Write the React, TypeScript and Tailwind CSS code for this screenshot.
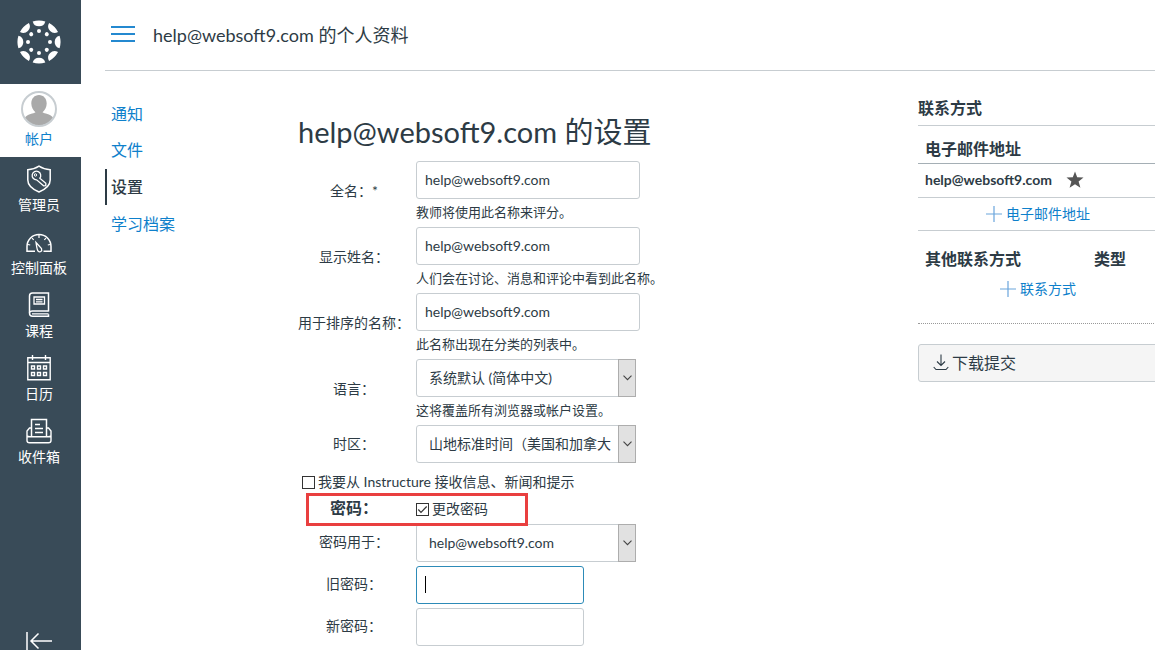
import type { ReactNode } from "react";

const EMAIL = "help@websoft9.com";

function Logo() {
  return (
    <svg width="44" height="44" viewBox="-22 -22 44 44" fill="#fff" aria-hidden="true">
      {[0, 45, 90, 135, 180, 225, 270, 315].map((angle) => (
        <g key={angle} transform={`rotate(${angle})`}>
          <path d="M-6.3 -20.6A21.5 21.5 0 0 1 6.3 -20.6A6.5 6.5 0 0 1 -6.3 -20.6Z" />
          <circle cy="-11" r="2" />
        </g>
      ))}
    </svg>
  );
}

function Icon({ children }: { children: ReactNode }) {
  return (
    <svg width="28" height="28" viewBox="0 0 28 28" fill="none" stroke="#fff" strokeWidth="1.5" aria-hidden="true">
      {children}
    </svg>
  );
}

const menu = [
  {
    label: "管理员",
    icon: (
      <Icon>
        <path d="M14 1.2C17.5 3.6 21.5 4.6 25.2 4.8V15C25.2 20.5 20 24.5 14 27C8 24.5 2.8 20.5 2.8 15V4.8C6.5 4.6 10.5 3.6 14 1.2Z" />
        <path d="M14.8 13.2A4.3 4.3 0 1 0 11.6 14.8L18.6 20.8L20.8 20.6V18.2Z" strokeWidth="1.3" />
        <circle cx="10.5" cy="10" r="1.2" strokeWidth="1" />
      </Icon>
    ),
  },
  {
    label: "控制面板",
    icon: (
      <Icon>
        <path d="M10 23.3H2V18.5A12 12 0 0 1 26 18.5V23.3H18.5" />
        <path d="M11 14.5L16.5 20.5C17.5 23.5 14.8 24.8 13 23C12 22 11.8 19.5 11 14.5Z" strokeWidth="1.3" />
        <path d="M14 7V10M7 10.2L8.7 11.9M21 10.2L19.3 11.9M3 16.5L5.2 17M25 16.5L22.8 17" strokeWidth="1.2" />
      </Icon>
    ),
  },
  {
    label: "课程",
    icon: (
      <Icon>
        <path d="M23.5 20.5V2H7.5C5.5 2 4.5 3 4.5 5V22C4.5 24 5.5 25.3 7.5 25.3H23.5V23.3" />
        <path d="M4.5 22C4.5 20.8 5.5 20 7.5 20H23.5M7 22.8H23.5" strokeWidth="1.3" />
        <path d="M9 6H19.5V13H9ZM11 8.5H17.5M11 10.8H17.5" strokeWidth="1.3" />
      </Icon>
    ),
  },
  {
    label: "日历",
    icon: (
      <Icon>
        <path d="M2.8 3.8H25.2V25.8H2.8ZM2.8 8.5H25.2M7.5 1V6M20.5 1V6" strokeWidth="1.4" />
        <path
          d="M6.5 12H9.5V15H6.5ZM12.5 12H15.5V15H12.5ZM18.5 12H21.5V15H18.5ZM6.5 18.5H9.5V21.5H6.5ZM12.5 18.5H15.5V21.5H12.5ZM18.5 18.5H21.5V21.5H18.5Z"
          strokeWidth="1.4"
        />
      </Icon>
    ),
  },
  {
    label: "收件箱",
    icon: (
      <Icon>
        <path d="M6.5 19.5V2.5H21.5V19.5" />
        <path
          d="M6.5 11H4.5L2 14V23.5C2 25 3 25.8 4.5 25.8H23.5C25 25.8 26 25 26 23.5V14L23.5 11H21.5M2 18.5C2.5 19.5 3.5 19.7 5 19.7H23C24.5 19.7 25.5 19.5 26 18.5"
          strokeWidth="1.4"
        />
        <path d="M10 7.5H15M10 11.5H18M10 15.5H18" strokeWidth="1.3" />
      </Icon>
    ),
  },
];

function Sidebar() {
  return (
    <nav className="flex h-full w-[81px] shrink-0 flex-col bg-[#394b58] text-sm text-white">
      <a href="#" aria-label="Canvas" className="flex h-21 items-center justify-center pr-[3px]">
        <Logo />
      </a>
      <a href="#" className="flex h-[73px] flex-col items-center bg-white pt-[7px] pr-[3px] text-[#0e80cb]">
        <svg width="36" height="36" viewBox="0 0 36 36" aria-hidden="true">
          <clipPath id="face">
            <circle cx="18" cy="18" r="16.5" />
          </clipPath>
          <g clipPath="url(#face)" fill="#a9a9a9">
            <path d="M18 4C22.5 4 25.7 7.5 25.7 12.5C25.7 16.5 23.5 19.8 21.5 21.3C23.5 23 29 22.6 32 26.5V36H4V26.5C7 22.6 12.5 23 14.5 21.3C12.5 19.8 10.3 16.5 10.3 12.5C10.3 7.5 13.5 4 18 4Z" />
          </g>
          <circle cx="18" cy="18" r="17" fill="none" stroke="#c7cdd1" strokeWidth="2" />
        </svg>
        <span className="mt-0.5 leading-5">帐户</span>
      </a>
      {menu.map((item) => (
        <a key={item.label} href="#" className="flex h-[63px] flex-col items-center pt-2 pr-[3px]">
          {item.icon}
          <span className="mt-0.5 leading-5">{item.label}</span>
        </a>
      ))}
      <button type="button" aria-label="收起导航" className="mt-auto flex h-[18px] justify-center pr-[3px]">
        <svg width="26" height="18" viewBox="0 0 26 18" fill="none" stroke="#fff" strokeWidth="1.5">
          <path d="M1 0V18M26 9H5M12.5 1.5L5 9L12.5 16.5" />
        </svg>
      </button>
    </nav>
  );
}

const sections = ["通知", "文件", "设置", "学习档案"];

function SectionNav() {
  return (
    <nav className="w-[193px] shrink-0 pt-[25px]">
      {sections.map((name) => (
        <a
          key={name}
          href="#"
          className={
            name === "设置"
              ? "my-px flex h-9 items-center border-l-2 border-[#2d3b45] pl-1 text-base font-medium"
              : "flex h-9 items-center border-l-2 border-transparent pl-1 text-base text-[#0e80cb]"
          }
        >
          {name}
        </a>
      ))}
    </nav>
  );
}

const row = "grid grid-cols-[112px_1fr] items-center gap-x-1.5";
const box = "h-[38px] rounded-[3px] border border-[#c7cdd1] bg-white text-sm";

function TextRow({ id, label, help }: { id: string; label: string; help: string }) {
  return (
    <div className={row}>
      <label htmlFor={id} className="pb-1.5 text-center">
        {label}
      </label>
      <div>
        <input id={id} defaultValue={EMAIL} className={`${box} block w-56 px-2 pb-0.5 outline-none`} />
        <p className="mb-0.5 text-[13px] leading-[26px]">{help}</p>
      </div>
    </div>
  );
}

function Select({ id, value }: { id: string; value: string }) {
  return (
    <div className="relative w-[220px]">
      <select id={id} className={`${box} block w-full appearance-none pr-6 pl-3 outline-none`}>
        <option>{value}</option>
      </select>
      <span className="pointer-events-none absolute inset-y-0 right-0 flex w-[18px] items-center justify-center border border-[#adadad] bg-[#e1e1e1]">
        <svg width="9" height="6" viewBox="0 0 9 6" fill="none" stroke="#444" strokeWidth="1.1">
          <path d="M0.5 0.7L4.5 4.7L8.5 0.7" />
        </svg>
      </span>
    </div>
  );
}

function Checkbox({ label, checked }: { label: string; checked?: boolean }) {
  return (
    <label className="flex items-center gap-[3px]">
      <span className="grid place-items-center">
        <input
          type="checkbox"
          defaultChecked={checked}
          className="peer col-start-1 row-start-1 size-[13px] appearance-none border border-[#333] bg-white"
        />
        <svg
          width="11"
          height="11"
          viewBox="0 0 11 11"
          fill="none"
          stroke="#333"
          strokeWidth="1.2"
          className="pointer-events-none invisible col-start-1 row-start-1 peer-checked:visible"
        >
          <path d="M1.3 5.5L4 8.3L9.7 2.5" />
        </svg>
      </span>
      {label}
    </label>
  );
}

function SettingsForm() {
  return (
    <form className="min-w-[620px] flex-1 pt-10 text-sm">
      <h1 className="h-[50px] text-[29px] leading-[42px]">{EMAIL} 的设置</h1>
      <TextRow id="name" label="全名：*" help="教师将使用此名称来评分。" />
      <TextRow id="short" label="显示姓名：" help="人们会在讨论、消息和评论中看到此名称。" />
      <TextRow id="sortable" label="用于排序的名称：" help="此名称出现在分类的列表中。" />
      <div className={row}>
        <label htmlFor="locale" className="pb-1.5 text-center">
          语言：
        </label>
        <div>
          <Select id="locale" value="系统默认 (简体中文)" />
          <p className="mb-0.5 text-[13px] leading-[26px]">这将覆盖所有浏览器或帐户设置。</p>
        </div>
      </div>
      <div className={row}>
        <label htmlFor="zone" className="text-center">
          时区：
        </label>
        <Select id="zone" value="山地标准时间（美国和加拿大）" />
      </div>
      <div className="flex h-[29px] items-end pl-1">
        <Checkbox label="我要从 Instructure 接收信息、新闻和提示" />
      </div>
      <div className={`${row} relative h-8`}>
        <strong className="text-center text-base">密码：</strong>
        <div className="pt-0.5">
          <Checkbox label="更改密码" checked />
        </div>
        {/* highlight frame around the password toggle */}
        <span className="pointer-events-none absolute top-px left-2 z-10 h-[33px] w-[222px] border-3 border-[#e93f3f]" />
      </div>
      <div className={`${row} gap-y-1`}>
        <label htmlFor="login" className="pb-0.5 text-center">
          密码用于：
        </label>
        <Select id="login" value={EMAIL} />
        <label htmlFor="old" className="pb-0.5 text-center">
          旧密码：
        </label>
        <div className="relative">
          <input
            id="old"
            type="password"
            className="block h-[38px] w-42 rounded-[3px] border border-[#2d8bb8] px-2 caret-transparent outline-none"
          />
          <span className="pointer-events-none absolute top-2.5 left-[9px] h-[17px] w-px bg-black" />
        </div>
        <label htmlFor="new" className="pb-0.5 text-center">
          新密码：
        </label>
        <input id="new" type="password" className={`${box} block w-42 px-2 outline-none`} />
      </div>
    </form>
  );
}

function AddLink({ label }: { label: string }) {
  return (
    <a href="#" className="flex items-center justify-center gap-1 text-sm text-[#0e80cb]">
      <svg width="16" height="16" viewBox="0 0 16 16" stroke="#6aa5dc" strokeWidth="1.2" aria-hidden="true">
        <path d="M8 0V16M0 8H16" />
      </svg>
      {label}
    </a>
  );
}

function Contacts() {
  return (
    <aside className="w-60 shrink-0 pt-5">
      <h2 className="h-[35px] border-b border-[#c7cdd1] text-base leading-[34px] font-bold">联系方式</h2>
      <table className="w-full border-collapse text-left">
        <thead>
          <tr className="h-[37px] border-b border-[#a5afb5]">
            <th className="pt-2.5 pb-0 pl-[7px] text-base leading-6">电子邮件地址</th>
          </tr>
        </thead>
        <tbody>
          <tr className="h-[34px] border-b border-[#c7cdd1]">
            <td className="pl-[7px]">
              <div className="flex items-center gap-3.5 text-sm font-bold">
                {EMAIL}
                <svg width="18" height="18" viewBox="0 0 18 18" fill="#555" aria-hidden="true">
                  <path d="M9 0.5L11.2 6.3L17.5 6.6L12.6 10.6L14.4 16.8L9 13.3L3.6 16.8L5.4 10.6L0.5 6.6L6.8 6.3Z" />
                </svg>
              </div>
            </td>
          </tr>
          <tr className="h-[33px] border-b border-[#c7cdd1]">
            <td>
              <AddLink label="电子邮件地址" />
            </td>
          </tr>
        </tbody>
      </table>
      <table className="mt-3 w-full text-left text-base">
        <thead>
          <tr className="h-8">
            <th className="w-44 pl-[7px]">其他联系方式</th>
            <th>类型</th>
          </tr>
        </thead>
        <tbody>
          <tr className="h-7">
            <td colSpan={2}>
              <AddLink label="联系方式" />
            </td>
          </tr>
        </tbody>
      </table>
      <hr className="mt-5 border-0 border-t border-dotted border-[#999]" />
      <button
        type="button"
        className="mt-5 flex h-[38px] w-full items-center gap-[3px] rounded-[3px] border border-[#c7cdd1] bg-[#f5f5f5] pl-3.5 text-base"
      >
        <svg width="16" height="18" viewBox="0 0 16 18" fill="none" stroke="#2d3b45" strokeWidth="1.1" aria-hidden="true">
          <path d="M8 0.5V11.5M4 7.5L8 11.5L12 7.5M0.7 13L3 15.5H13L15.3 13" />
        </svg>
        下载提交
      </button>
    </aside>
  );
}

export default function App() {
  return (
    <div className="flex h-screen overflow-hidden bg-white font-[Lato,'Noto_Sans_CJK_SC',sans-serif] text-[#2d3b45]">
      <Sidebar />
      <main className="min-w-0 flex-1 overflow-hidden pl-6">
        <header className="flex h-[71px] items-center gap-[18px] border-b border-[#c7cdd1] pl-1.5">
          <button type="button" aria-label="菜单" className="mb-0.5 flex h-4 w-6 flex-col justify-between">
            <span className="h-0.5 w-full bg-[#2489d0]" />
            <span className="h-0.5 w-full bg-[#2489d0]" />
            <span className="h-0.5 w-full bg-[#2489d0]" />
          </button>
          <p className="text-lg">{EMAIL} 的个人资料</p>
        </header>
        <div className="flex">
          <SectionNav />
          <SettingsForm />
          <Contacts />
        </div>
      </main>
    </div>
  );
}
